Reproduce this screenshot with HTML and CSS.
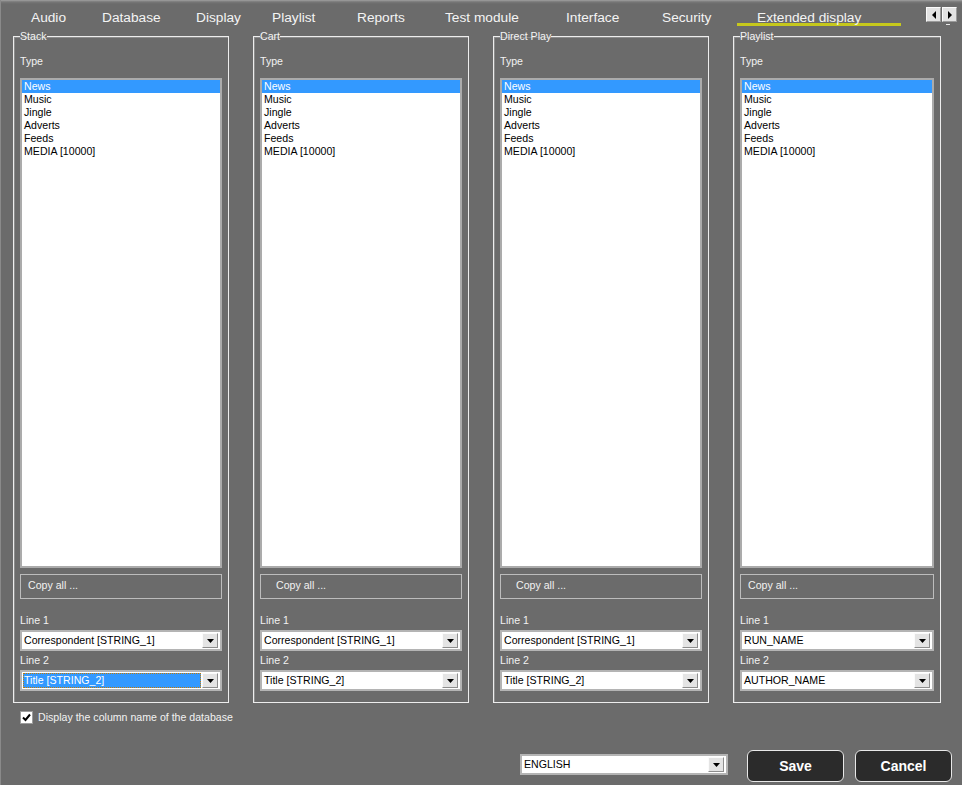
FILE: index.html
```html
<!DOCTYPE html>
<html>
<head>
<meta charset="utf-8">
<title>Extended display</title>
<link rel="stylesheet" href="styles.css">
</head>
<body>
<div class="app">
  <nav class="tabs">
    <span class="tab">Audio</span>
    <span class="tab">Database</span>
    <span class="tab">Display</span>
    <span class="tab">Playlist</span>
    <span class="tab">Reports</span>
    <span class="tab">Test module</span>
    <span class="tab">Interface</span>
    <span class="tab">Security</span>
    <span class="tab active">Extended display</span>
    <div class="scroller">
      <span class="arrow"><svg width="6" height="8" viewBox="0 0 6 8"><path d="M5 0 L1 4 L5 8 Z" fill="#000"/></svg></span>
      <span class="arrow"><svg width="6" height="8" viewBox="0 0 6 8"><path d="M1 0 L5 4 L1 8 Z" fill="#000"/></svg></span>
      <span class="dash"></span>
    </div>
  </nav>

  <main class="panels">
    <fieldset class="panel">
      <legend>Stack</legend>
      <div class="label type">Type</div>
      <ul class="listbox">
        <li class="sel">News</li><li>Music</li><li>Jingle</li><li>Adverts</li><li>Feeds</li><li>MEDIA [10000]</li>
      </ul>
      <div class="copy">Copy all ...</div>
      <div class="label line">Line 1</div>
      <div class="select"><span class="val">Correspondent [STRING_1]</span><span class="drop"><svg width="7" height="4" viewBox="0 0 7 4"><path d="M0 0 H7 L3.5 4 Z" fill="#000"/></svg></span></div>
      <div class="label line">Line 2</div>
      <div class="select"><span class="val focus">Title [STRING_2]</span><span class="drop"><svg width="7" height="4" viewBox="0 0 7 4"><path d="M0 0 H7 L3.5 4 Z" fill="#000"/></svg></span></div>
    </fieldset>

    <fieldset class="panel">
      <legend>Cart</legend>
      <div class="label type">Type</div>
      <ul class="listbox">
        <li class="sel">News</li><li>Music</li><li>Jingle</li><li>Adverts</li><li>Feeds</li><li>MEDIA [10000]</li>
      </ul>
      <div class="copy wide">Copy all ...</div>
      <div class="label line">Line 1</div>
      <div class="select"><span class="val">Correspondent [STRING_1]</span><span class="drop"><svg width="7" height="4" viewBox="0 0 7 4"><path d="M0 0 H7 L3.5 4 Z" fill="#000"/></svg></span></div>
      <div class="label line">Line 2</div>
      <div class="select"><span class="val">Title [STRING_2]</span><span class="drop"><svg width="7" height="4" viewBox="0 0 7 4"><path d="M0 0 H7 L3.5 4 Z" fill="#000"/></svg></span></div>
    </fieldset>

    <fieldset class="panel">
      <legend>Direct Play</legend>
      <div class="label type">Type</div>
      <ul class="listbox">
        <li class="sel">News</li><li>Music</li><li>Jingle</li><li>Adverts</li><li>Feeds</li><li>MEDIA [10000]</li>
      </ul>
      <div class="copy wide">Copy all ...</div>
      <div class="label line">Line 1</div>
      <div class="select"><span class="val">Correspondent [STRING_1]</span><span class="drop"><svg width="7" height="4" viewBox="0 0 7 4"><path d="M0 0 H7 L3.5 4 Z" fill="#000"/></svg></span></div>
      <div class="label line">Line 2</div>
      <div class="select"><span class="val">Title [STRING_2]</span><span class="drop"><svg width="7" height="4" viewBox="0 0 7 4"><path d="M0 0 H7 L3.5 4 Z" fill="#000"/></svg></span></div>
    </fieldset>

    <fieldset class="panel narrow">
      <legend>Playlist</legend>
      <div class="label type">Type</div>
      <ul class="listbox">
        <li class="sel">News</li><li>Music</li><li>Jingle</li><li>Adverts</li><li>Feeds</li><li>MEDIA [10000]</li>
      </ul>
      <div class="copy">Copy all ...</div>
      <div class="label line">Line 1</div>
      <div class="select"><span class="val">RUN_NAME</span><span class="drop"><svg width="7" height="4" viewBox="0 0 7 4"><path d="M0 0 H7 L3.5 4 Z" fill="#000"/></svg></span></div>
      <div class="label line">Line 2</div>
      <div class="select"><span class="val">AUTHOR_NAME</span><span class="drop"><svg width="7" height="4" viewBox="0 0 7 4"><path d="M0 0 H7 L3.5 4 Z" fill="#000"/></svg></span></div>
    </fieldset>
  </main>

  <div class="check">
    <span class="box"><svg width="9" height="9" viewBox="0 0 9 9"><path d="M1 4.5 L3.5 7 L8 1.5" fill="none" stroke="#000" stroke-width="2"/></svg></span>
    <span class="check-text">Display the column name of the database</span>
  </div>

  <footer class="footer">
    <div class="select lang"><span class="val">ENGLISH</span><span class="drop"><svg width="7" height="4" viewBox="0 0 7 4"><path d="M0 0 H7 L3.5 4 Z" fill="#000"/></svg></span></div>
    <span class="btn save">Save</span>
    <span class="btn cancel">Cancel</span>
  </footer>
</div>
</body>
</html>
```

FILE: styles.css
```css
* { box-sizing: border-box; }
html, body { margin: 0; padding: 0; }
body {
  background: #6b6b6b;
  font-family: "Liberation Sans", Arial, sans-serif;
  font-size: 10.6px;
  color: #f2f2f2;
}
.app {
  width: 962px;
  height: 785px;
  box-shadow: inset 1px 0 0 #8a8a8a;
  background-image: linear-gradient(#a2a2a2, #8a8a8a 1px, #777 2px, #6b6b6b 4px);
  background-repeat: no-repeat;
  background-size: 100% 4px;
  background-color: #6b6b6b;
  overflow: hidden;
}

/* tabs */
.tabs {
  display: grid;
  grid-template-columns: 71px 94px 76px 85px 88px 121px 96px 75px 164px 1fr;
  padding-left: 31px;
  height: 30px;
  align-items: start;
}
.tab {
  font-size: 13.7px;
  line-height: 16px;
  padding-top: 10px;
  color: #f4f4f4;
  white-space: nowrap;
}
.tab.active {
  padding-left: 20px;
  height: 26px;
  border-bottom: 3px solid #c6c81c;
}
.scroller {
  display: flex;
  padding-top: 7px;
  padding-left: 25px;
  gap: 1px;
  position: relative;
}
.arrow {
  width: 15px;
  height: 15px;
  background: #e2e2e2;
  border-top: 1px solid #fafafa;
  border-left: 1px solid #fafafa;
  border-right: 1px solid #9a9a9a;
  border-bottom: 1px solid #9a9a9a;
  display: flex;
  align-items: center;
  justify-content: center;
}
.dash {
  position: absolute;
  left: 45px;
  top: 24px;
  width: 4px;
  height: 1px;
  background: #e8e8e8;
}

/* panels */
.panels {
  display: flex;
  gap: 24px;
  padding-left: 13px;
}
.panel {
  width: 216px;
  margin: 0;
  padding: 0 6px 11px;
  border: 1px solid #ededed;
  box-shadow: inset 1px 1px 0 #8c8c8c;
  display: flex;
  flex-direction: column;
  min-width: 0;
}
.panel.narrow { width: 208px; }
legend {
  padding: 0;
  font-size: 10.6px;
  line-height: 12px;
  color: #f4f4f4;
}
.label {
  line-height: 13px;
  color: #f2f2f2;
}
.label.type { margin-top: 13px; }
.label.line { margin-top: 3px; }

.listbox {
  list-style: none;
  margin: 10px 0 0;
  padding: 0;
  height: 490px;
  background: #fff;
  border: 2px solid #ababab;
  color: #000;
}
.listbox li {
  line-height: 13px;
  padding-left: 2px;
}
.listbox li.sel {
  background: #3399ff;
  color: #fff;
}

.copy {
  margin-top: 6px;
  height: 25px;
  border: 1px solid #bcbcbc;
  padding-left: 7px;
  line-height: 21px;
  color: #f2f2f2;
  margin-bottom: 12px;
}
.copy.wide { padding-left: 15px; }

.select {
  margin-top: 3px;
  height: 21px;
  background: #fff;
  border: 2px solid #b4b4b4;
  display: flex;
  align-items: center;
  padding: 1px 2px 1px 1px;
  color: #000;
}
.select .val {
  flex: 1;
  height: 15px;
  line-height: 13px;
  padding-left: 0;
  border: 1px solid transparent;
  white-space: nowrap;
}
.select .val.focus {
  background: #3399ff;
  color: #fff;
  border: 1px dotted #c97a00;
  margin-right: 1px;
}
.drop {
  width: 16px;
  height: 15px;
  background: #e4e4e4;
  border-top: 1px solid #fbfbfb;
  border-left: 1px solid #fbfbfb;
  border-right: 1px solid #8e8e8e;
  border-bottom: 1px solid #8e8e8e;
  display: flex;
  align-items: center;
  justify-content: center;
}

/* checkbox */
.check {
  display: flex;
  align-items: center;
  margin: 8px 0 0 20px;
  gap: 5px;
}
.box {
  width: 13px;
  height: 13px;
  background: #fff;
  border: 1px solid #9c9c9c;
  display: flex;
  align-items: center;
  justify-content: center;
}
.check-text { color: #f2f2f2; line-height: 13px; }

/* footer */
.footer {
  display: flex;
  align-items: flex-start;
  margin-top: 26px;
  padding-left: 520px;
  height: 32px;
}
.select.lang {
  width: 208px;
  margin-top: 4px;
}
.btn {
  width: 97px;
  height: 32px;
  border: 1px solid #e8e8e8;
  border-radius: 6px;
  background: #2b2b2b;
  color: #fff;
  font-weight: bold;
  font-size: 14px;
  display: flex;
  align-items: center;
  justify-content: center;
}
.btn.save { margin-left: 19px; }
.btn.cancel { margin-left: 11px; }
```
